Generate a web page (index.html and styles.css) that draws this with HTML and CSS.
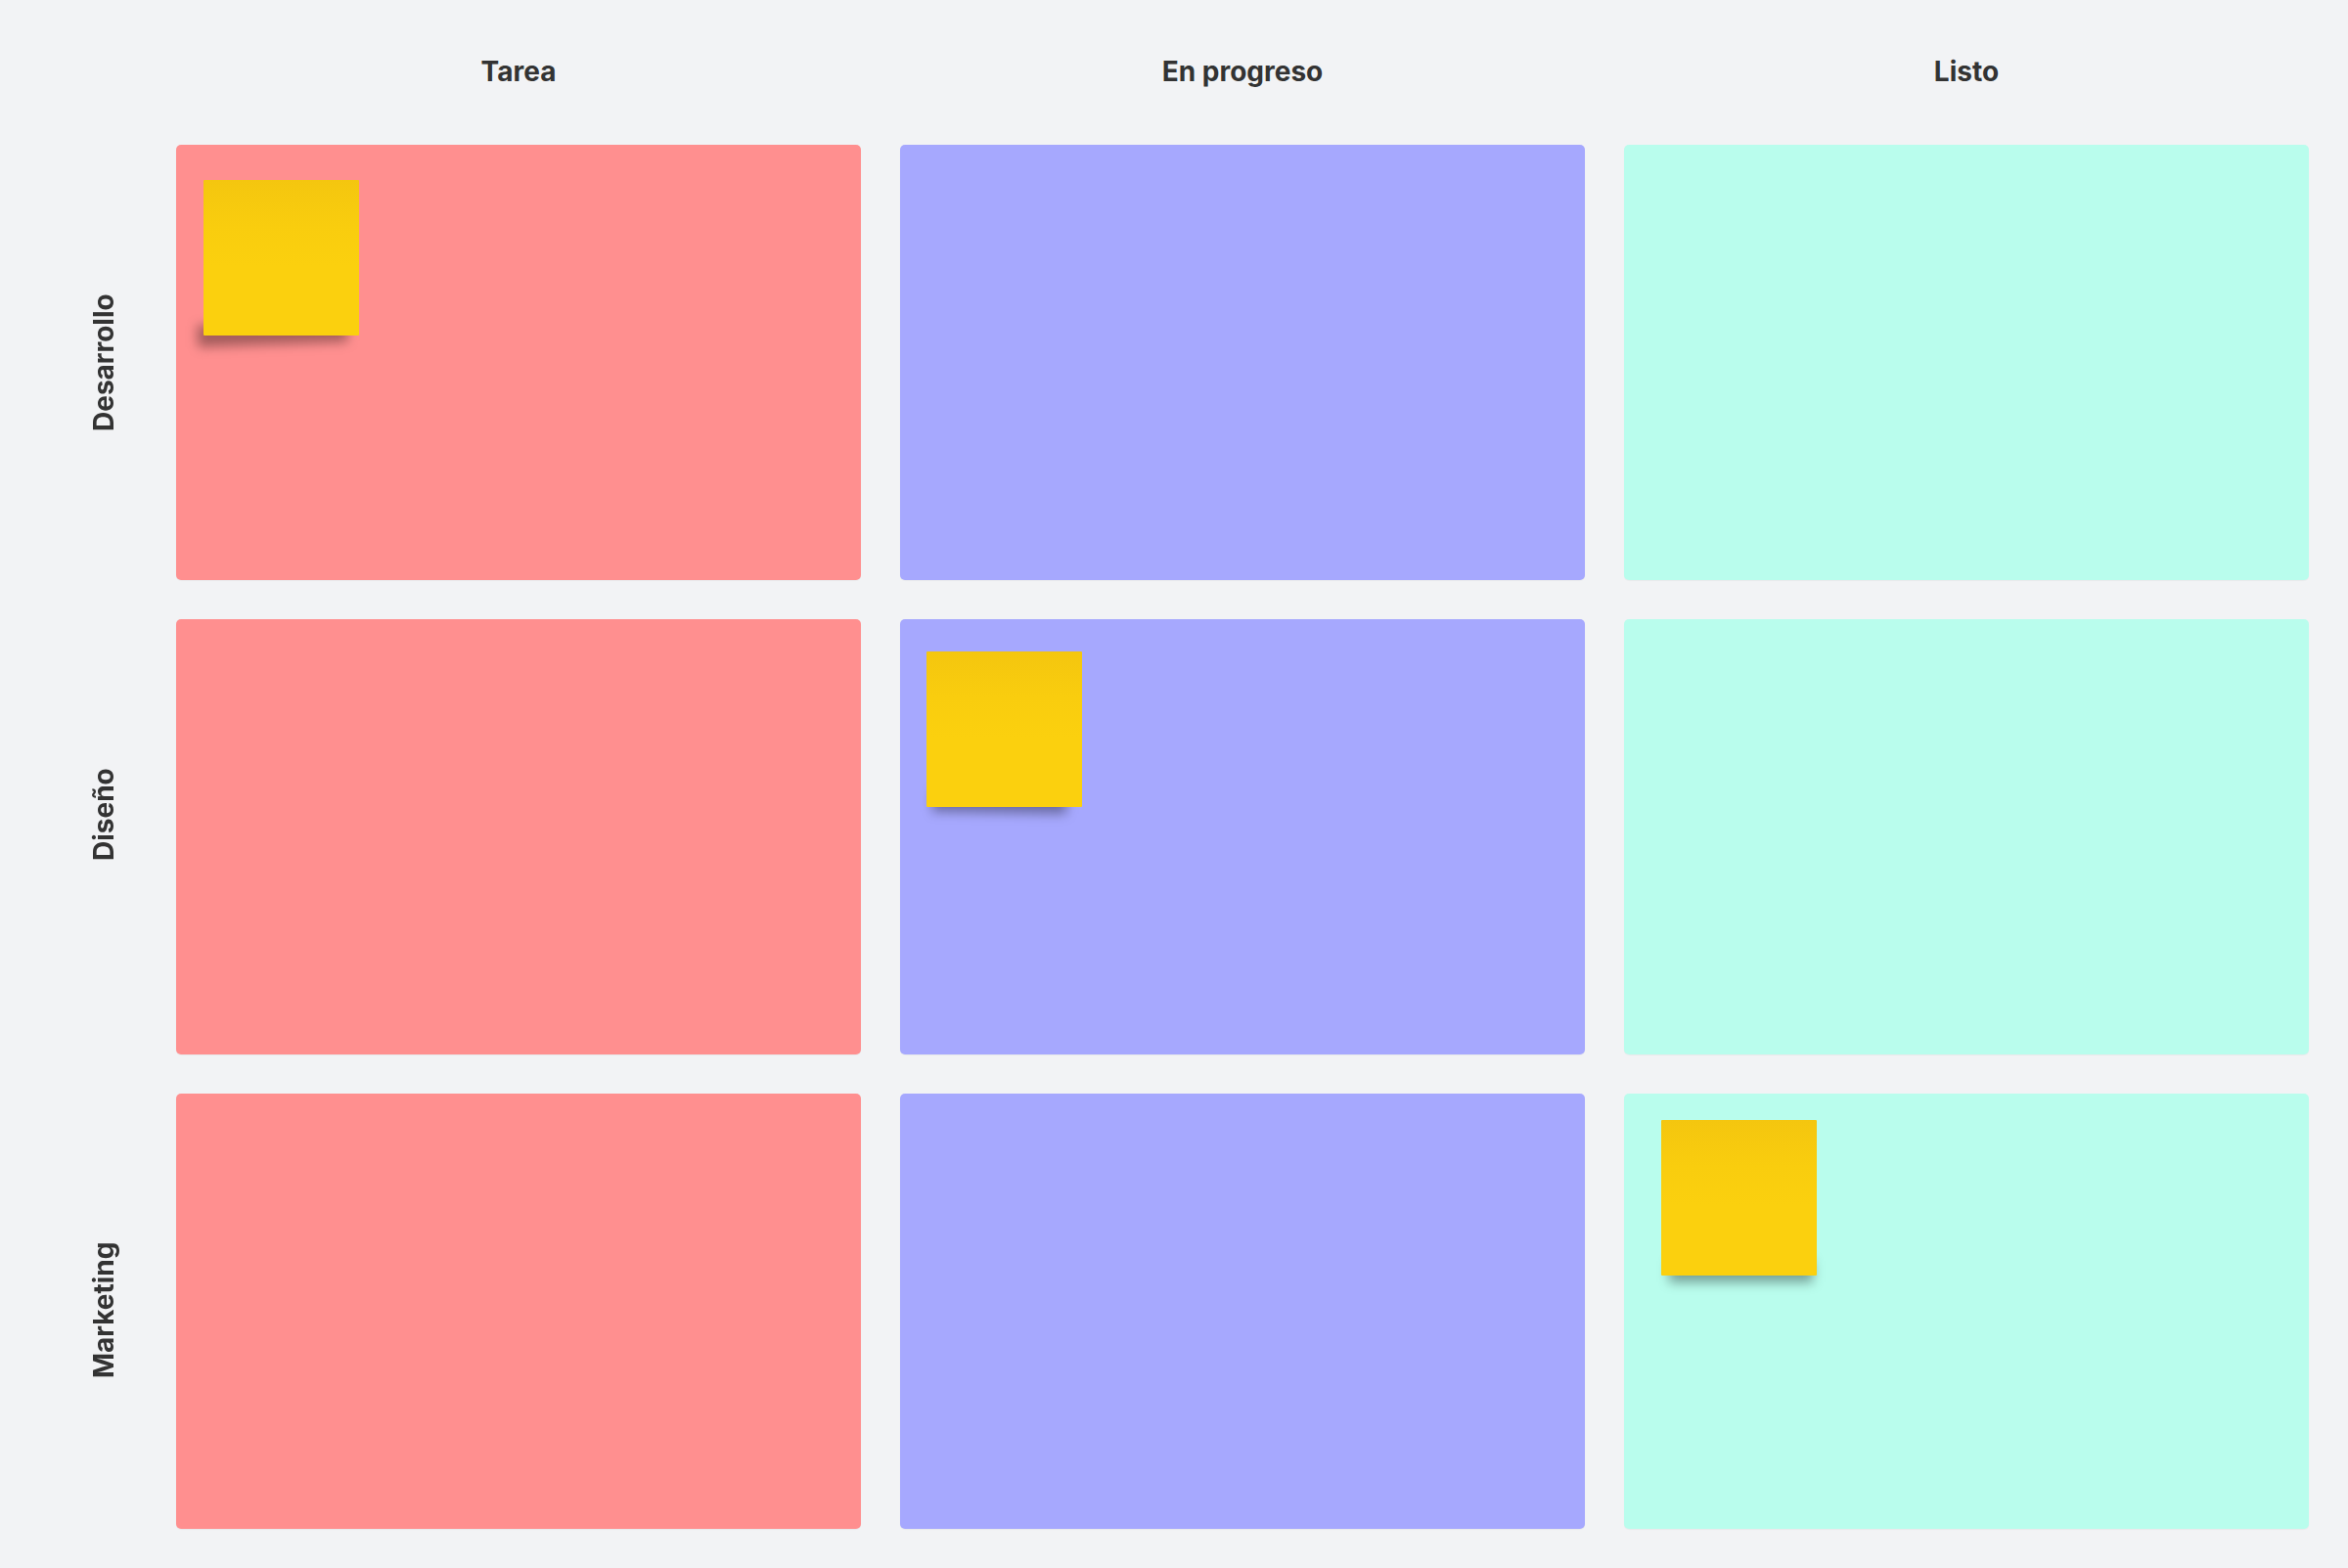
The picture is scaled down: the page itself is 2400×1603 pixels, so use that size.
FILE: index.html
```html
<!DOCTYPE html>
<html lang="es">
<head>
<meta charset="utf-8">
<title>Tablero</title>
<link rel="stylesheet" href="styles.css">
</head>
<body>
<main class="board">
  <div class="corner"></div>
  <div class="col-head">Tarea</div>
  <div class="col-head">En progreso</div>
  <div class="col-head">Listo</div>

  <div class="row-head"><span class="row-label">Desarrollo</span></div>
  <div class="cell cell--todo"><div class="note note--a"></div></div>
  <div class="cell cell--doing"></div>
  <div class="cell cell--done"></div>

  <div class="row-head"><span class="row-label">Diseño</span></div>
  <div class="cell cell--todo"></div>
  <div class="cell cell--doing"><div class="note note--b"></div></div>
  <div class="cell cell--done"></div>

  <div class="row-head"><span class="row-label">Marketing</span></div>
  <div class="cell cell--todo"></div>
  <div class="cell cell--doing"></div>
  <div class="cell cell--done"><div class="note note--c"></div></div>
</main>
</body>
</html>
```
FILE: styles.css
```css
html, body {
  margin: 0;
  padding: 0;
  height: 100%;
}

body {
  background: #f2f3f5;
  font-family: Inter, "Noto Sans", "Liberation Sans", sans-serif;
  color: #333333;
}

.board {
  box-sizing: border-box;
  height: 100vh;
  padding: 40px;
  display: grid;
  grid-template-columns: 100px repeat(3, 1fr);
  grid-template-rows: 68px repeat(3, 1fr);
  gap: 40px;
}

.col-head {
  display: flex;
  align-items: center;
  justify-content: center;
  font-size: 28px;
  font-weight: 700;
  padding-bottom: 3px;
}

.row-head {
  display: flex;
  align-items: center;
  justify-content: center;
  padding-left: 34px;
}

.row-label {
  writing-mode: vertical-rl;
  transform: rotate(180deg);
  height: 142px;
  text-align: end;
  font-size: 28px;
  font-weight: 700;
  line-height: 1.2;
  white-space: nowrap;
}

.cell {
  position: relative;
  z-index: 0;
  border-radius: 5px;
  box-shadow: 0 1px 1px rgba(0, 0, 0, 0.04);
}

.cell--todo { background: #ff8f8f; }
.cell--doing { background: #a6a8fe; }
.cell--done { background: #b9fded; }

.note {
  position: absolute;
  width: 159px;
  height: 159px;
  border-radius: 1px;
  background: linear-gradient(180deg, #f4c60f 0%, #f9cd0e 30%, #fbd00e 55%, #fbd00e 100%);
}

.note::after {
  content: "";
  position: absolute;
  z-index: -1;
  left: 6px;
  right: 6px;
  bottom: -6px;
  height: 22px;
  background: rgba(0, 0, 0, 0.36);
  filter: blur(6px);
}

.note--a {
  left: 28px;
  top: 36px;
}
.note--a::after {
  left: -6px;
  right: 12px;
  bottom: -9px;
  transform: rotate(-2deg);
}

.note--b {
  left: 27px;
  top: 33px;
}
.note--b::after {
  left: 6px;
  right: 16px;
  bottom: -6px;
  transform: rotate(1deg);
}

.note--c {
  left: 38px;
  top: 27px;
}
.note--c::after {
  left: 8px;
  right: 4px;
  bottom: -7px;
}
```
